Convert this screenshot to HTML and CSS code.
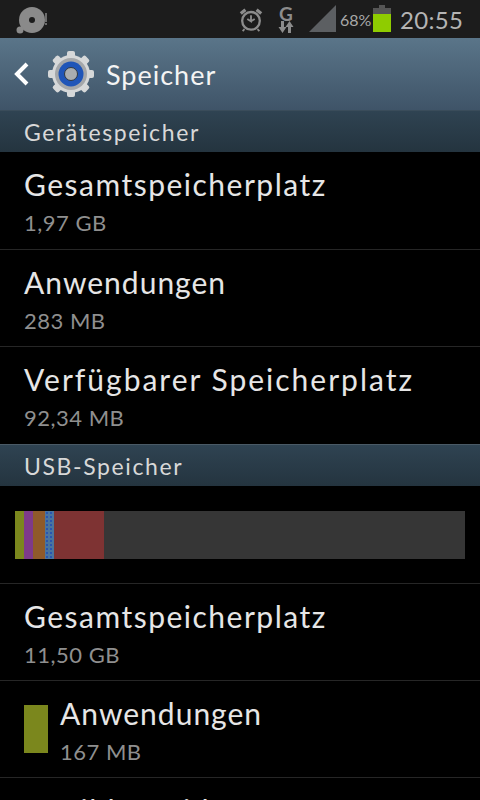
FILE: index.html
```html
<!DOCTYPE html>
<html lang="de">
<head>
    <meta charset="UTF-8" />
    <title>Speicher</title>
    <link rel="stylesheet" href="styles.css">
</head>
<body>
    <div class="statusbar">
        <svg class="disc-icon" width="42" height="34" viewBox="0 0 42 34">
            <circle cx="24" cy="18" r="13" fill="#8a8a8a"/>
            <circle cx="24" cy="18" r="3" fill="#1c1c1c"/>
            <circle cx="12" cy="28" r="3.5" fill="#8a8a8a"/>
            <path d="M37 11h2v9h-2zM37 21h2v2h-2z" fill="#6c6c6c"/>
        </svg>
        <div class="status-right">
            <svg width="26" height="28" viewBox="0 0 28 28" fill="none" stroke="#8c8c8c">
                <circle cx="14" cy="16" r="9.5" stroke-width="2.5"/>
                <path d="M14 10v6.500l-4-2.500M14 16.500l4-2.500" stroke-width="2"/>
                <path d="M3 8l5-4M25 8l-5-4" stroke-width="3.5"/>
                <path d="M7 25l-2 2M21 25l2 2" stroke-width="2"/>
            </svg>
            <div class="net-type">
                <span class="net-letter">G</span>
                <svg width="16" height="12" viewBox="0 0 16 12" fill="#8c8c8c">
                    <path d="M3 0h3v6h2.500L4.500 12 .5 6H3zM10 6H7.500L11.500 0l4 6H13v6h-3z"/>
                </svg>
            </div>
            <svg class="signal" width="30" height="28" viewBox="0 0 30 28">
                <path d="M1 27L28 0v27z" fill="#5c5f62"/>
            </svg>
            <span class="battery-text">68%</span>
            <div class="battery">
                <div class="battery-cap"></div>
                <div class="battery-body"><div class="battery-level"></div></div>
            </div>
            <span class="clock">20:55</span>
        </div>
    </div>

    <header class="actionbar">
        <svg class="back" width="18" height="24" viewBox="0 0 18 24">
            <path d="M15 2L5 12l10 10" fill="none" stroke="#fff" stroke-width="4"/>
        </svg>
        <svg class="gear" width="48" height="48" viewBox="0 0 48 48">
            <g fill="#d6d8d9">
                <circle cx="24" cy="24" r="19"/>
                <rect x="20" y="1" width="8" height="46" rx="2"/>
                <rect x="20" y="1" width="8" height="46" rx="2" transform="rotate(45 24 24)"/>
                <rect x="20" y="1" width="8" height="46" rx="2" transform="rotate(90 24 24)"/>
                <rect x="20" y="1" width="8" height="46" rx="2" transform="rotate(135 24 24)"/>
            </g>
            <circle cx="24" cy="24" r="16" fill="#a4a7aa"/>
            <circle cx="24" cy="24" r="12.500" fill="#1f55b8"/>
            <circle cx="24" cy="24" r="6.500" fill="#a9adb0" stroke="#303840" stroke-width="1"/>
        </svg>
        <h1 class="title">Speicher</h1>
    </header>

    <div class="section-head first">Gerätespeicher</div>
    <div class="row tall">
        <div class="row-title">Gesamtspeicherplatz</div>
        <div class="row-sub">1,97 GB</div>
    </div>
    <div class="row">
        <div class="row-title tight">Anwendungen</div>
        <div class="row-sub">283 MB</div>
    </div>
    <div class="row last">
        <div class="row-title wide">Verfügbarer Speicherplatz</div>
        <div class="row-sub">92,34 MB</div>
    </div>

    <div class="section-head">USB-Speicher</div>
    <div class="usage-row">
        <div class="usage-bar">
            <div class="seg seg-apps"></div>
            <div class="seg seg-media"></div>
            <div class="seg seg-audio"></div>
            <div class="seg seg-dl"></div>
            <div class="seg seg-misc"></div>
        </div>
    </div>
    <div class="row">
        <div class="row-title">Gesamtspeicherplatz</div>
        <div class="row-sub">11,50 GB</div>
    </div>
    <div class="row swatch-row">
        <div class="swatch"></div>
        <div>
            <div class="row-title tight">Anwendungen</div>
            <div class="row-sub">167 MB</div>
        </div>
    </div>
    <div class="row swatch-row">
        <div class="swatch swatch-media"></div>
        <div>
            <div class="row-title">Bilder, Videos</div>
        </div>
    </div>
</body>
</html>
```

FILE: styles.css
```css
* {
    margin: 0;
    padding: 0;
    box-sizing: border-box;
}

html, body {
    height: 800px;
    overflow: hidden;
}

body {
    background-color: #000;
    font-family: 'Lato', sans-serif;
    color: #e4e4e4;
}

.statusbar {
    display: flex;
    justify-content: space-between;
    align-items: center;
    height: 38px;
    padding: 0 18px 0 8px;
    background-color: #1c1c1c;
}

.status-right {
    display: flex;
    align-items: center;
}

.net-type {
    display: flex;
    flex-direction: column;
    align-items: center;
    width: 16px;
    margin: 0 14px;
}

.net-letter {
    font-size: 19px;
    line-height: 15px;
    font-weight: 700;
    color: #8c8c8c;
}

.battery-text {
    width: 30px;
    margin: 0 3px 0 2px;
    font-size: 16px;
    color: #a8a8a8;
}

.battery {
    width: 18px;
    margin: 0 9px 1px 0;
}

.battery-cap {
    width: 6px;
    height: 3px;
    margin: 0 auto;
    background-color: #555;
}

.battery-body {
    display: flex;
    align-items: flex-end;
    height: 24px;
    background-color: #555;
}

.battery-level {
    width: 100%;
    height: 18px;
    background-color: #8fcc00;
}

.clock {
    width: 62px;
    font-size: 24px;
    letter-spacing: 0.3px;
    color: #b4b4b4;
}

.actionbar {
    display: flex;
    align-items: center;
    height: 72px;
    padding-left: 12px;
    background: linear-gradient(#5a7589, #3f5468);
}

.back {
    margin-right: 17px;
}

.gear {
    margin-right: 11px;
}

.title {
    font-size: 27px;
    font-weight: 400;
    letter-spacing: 1px;
    color: #f4f4f4;
}

.section-head {
    display: flex;
    align-items: center;
    height: 42px;
    padding-left: 24px;
    font-size: 23px;
    letter-spacing: 1.6px;
    color: #d8d8d8;
    background: linear-gradient(#2f4352, #24343f);
    border-top: 1px solid #4a5a66;
}

.section-head.first {
    border-top: 1px solid #3a4c5a;
}

.row {
    height: 97px;
    padding: 13px 24px 0;
    border-bottom: 1px solid #262626;
}

.row.tall {
    height: 98px;
}

.row.last {
    border-bottom: none;
}

.row-title {
    font-size: 30px;
    line-height: 38px;
    letter-spacing: 1.5px;
    color: #e6e6e6;
}

.row-title.tight {
    letter-spacing: 1px;
}

.row-title.wide {
    letter-spacing: 2px;
}

.row-sub {
    margin-top: 5px;
    font-size: 22px;
    line-height: 30px;
    letter-spacing: 0.5px;
    color: #8f8f8f;
}

.usage-row {
    height: 98px;
    padding: 25px 15px 0;
    border-bottom: 1px solid #262626;
}

.usage-bar {
    display: flex;
    height: 48px;
    background-color: #363636;
}

.seg {
    height: 100%;
}

.seg-apps {
    width: 9px;
    background-color: #7b871d;
}

.seg-media {
    width: 9px;
    background-color: #7e3a8a;
}

.seg-audio {
    width: 12px;
    background-color: #8f5a2b;
}

.seg-dl {
    width: 9px;
    background-color: #4a75a0;
    background-image: radial-gradient(#2a55b0 1px, transparent 1px);
    background-size: 4px 4px;
}

.seg-misc {
    width: 50px;
    background-color: #7e3333;
}

.swatch-row {
    display: flex;
    gap: 12px;
}

.swatch {
    flex: none;
    width: 24px;
    height: 48px;
    margin-top: 11px;
    background-color: #7b871d;
}

.swatch-media {
    background-color: #7e3a8a;
}
```
